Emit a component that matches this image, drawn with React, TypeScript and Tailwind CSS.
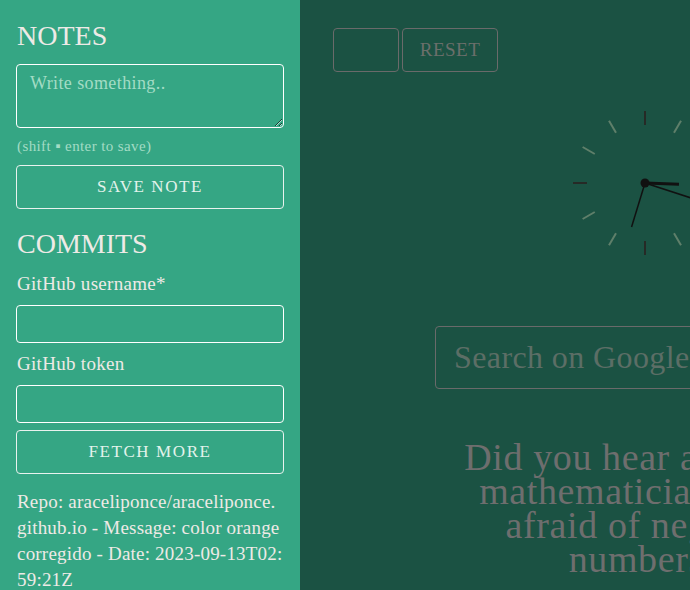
import { useState } from 'react';

const serif = { fontFamily: '"Liberation Serif", "DejaVu Serif", serif' };

function Clock() {
  const ticks = Array.from({ length: 12 }, (_, i) => i);
  // hand angles in degrees, 0 = 12 o'clock, clockwise
  const hour = 92;
  const minute = 108;
  const second = 197;
  const end = (deg: number, len: number) => {
    const r = (deg * Math.PI) / 180;
    return { x: 80 + Math.sin(r) * len, y: 80 - Math.cos(r) * len };
  };
  const h = end(hour, 34);
  const m = end(minute, 62);
  const s = end(second, 46);
  return (
    <svg width="160" height="160" viewBox="0 0 160 160" className="block mx-auto">
      {ticks.map(i => {
        const a = (i * 30 * Math.PI) / 180;
        const major = i % 3 === 0;
        return (
          <line
            key={i}
            x1={80 + Math.sin(a) * 58}
            y1={80 - Math.cos(a) * 58}
            x2={80 + Math.sin(a) * 72}
            y2={80 - Math.cos(a) * 72}
            stroke={major ? '#262a26' : '#5f7f6a'}
            strokeWidth="2"
          />
        );
      })}
      <line x1="80" y1="80" x2={h.x} y2={h.y} stroke="#111" strokeWidth="3" />
      <line x1="80" y1="80" x2={m.x} y2={m.y} stroke="#111" strokeWidth="1.5" />
      <line x1="80" y1="80" x2={s.x} y2={s.y} stroke="#111" strokeWidth="1.5" />
      <circle cx="80" cy="80" r="4.5" fill="#111" />
    </svg>
  );
}

export default function App() {
  const [note, setNote] = useState('');
  const [user, setUser] = useState('');
  const [token, setToken] = useState('');

  return (
    <div className="flex w-[690px] h-[590px] overflow-hidden" style={serif}>
      {/* Sidebar */}
      <div className="w-[300px] shrink-0 bg-[#35a684] px-4 pt-[18px] text-[#eeeae6]">
        <h2 className="text-[28px] leading-[36px] pl-[1px]">NOTES</h2>
        <textarea
          value={note}
          onChange={e => setNote(e.target.value)}
          placeholder="Write something.."
          className="mt-[10px] block w-[268px] h-[64px] bg-transparent border border-white rounded-[4px] px-[13px] py-[7px] text-[18px] tracking-[0.4px] leading-[22px] outline-none placeholder:text-[#a3dcc5]"
        />
        <p className="mt-[9px] text-[15px] tracking-[0.4px] leading-[18px] text-[#a3dcc5] pl-[1px]">(shift ▪ enter to save)</p>
        <button className="mt-[10px] w-[268px] h-[44px] border border-[#e8f2ee] rounded-[4px] text-[17px] tracking-[1.6px] text-[#e3f3ec]">
          SAVE NOTE
        </button>

        <h2 className="mt-[17px] text-[28px] leading-[36px] pl-[1px]">COMMITS</h2>
        <label className="block mt-[11px] text-[19px] tracking-[0.3px] leading-[22px] pl-[1px]">GitHub username*</label>
        <input
          value={user}
          onChange={e => setUser(e.target.value)}
          className="mt-[10px] block w-[268px] h-[38px] bg-transparent border border-white rounded-[4px] outline-none px-2"
        />
        <label className="block mt-[10px] text-[19px] tracking-[0.3px] leading-[22px] pl-[1px]">GitHub token</label>
        <input
          value={token}
          onChange={e => setToken(e.target.value)}
          className="mt-[10px] block w-[268px] h-[38px] bg-transparent border border-white rounded-[4px] outline-none px-2"
        />
        <button className="mt-[7px] w-[268px] h-[44px] border border-[#e8f2ee] rounded-[4px] text-[17px] tracking-[1.6px] text-[#e3f3ec]">
          FETCH MORE
        </button>
        <p className="mt-[15px] text-[19px] tracking-[0.2px] leading-[26px] pl-[1px] break-all text-[#eeeae6]">
          Repo: araceliponce/araceliponce.github.io - Message: color orange corregido - Date: 2023-09-13T02:59:21Z
        </p>
      </div>

      {/* Main */}
      <div className="w-[690px] shrink-0 bg-[#1b5243] pt-[28px]">
        <div className="flex gap-[3px] pl-[33px]">
          <button className="w-[66px] h-[44px] border border-[#6a6a6a] rounded-[4px]" />
          <button className="w-[96px] h-[44px] border border-[#6a6a6a] rounded-[4px] text-[19px] tracking-[0.5px] text-[#6b6f6b]">
            RESET
          </button>
        </div>
        <div className="mt-[31px]">
          <Clock />
        </div>
        <input
          placeholder="Search on Google"
          className="mt-[63px] mx-auto block w-[420px] h-[63px] bg-transparent border border-[#6a6a6a] rounded-[4px] px-[18px] text-[32px] tracking-[0.4px] outline-none placeholder:text-[#5c6e66]"
        />
        <div className="mt-[51px] mx-auto w-[380px] text-center text-[38px] tracking-[0.6px] leading-[34px] text-[#6e6e6e]">
          <p>Did you hear about the mathematician who's afraid of negative numbers?</p>
          <p className="mt-[24px]">He'll stop at nothing to avoid them.</p>
        </div>
      </div>
    </div>
  );
}
